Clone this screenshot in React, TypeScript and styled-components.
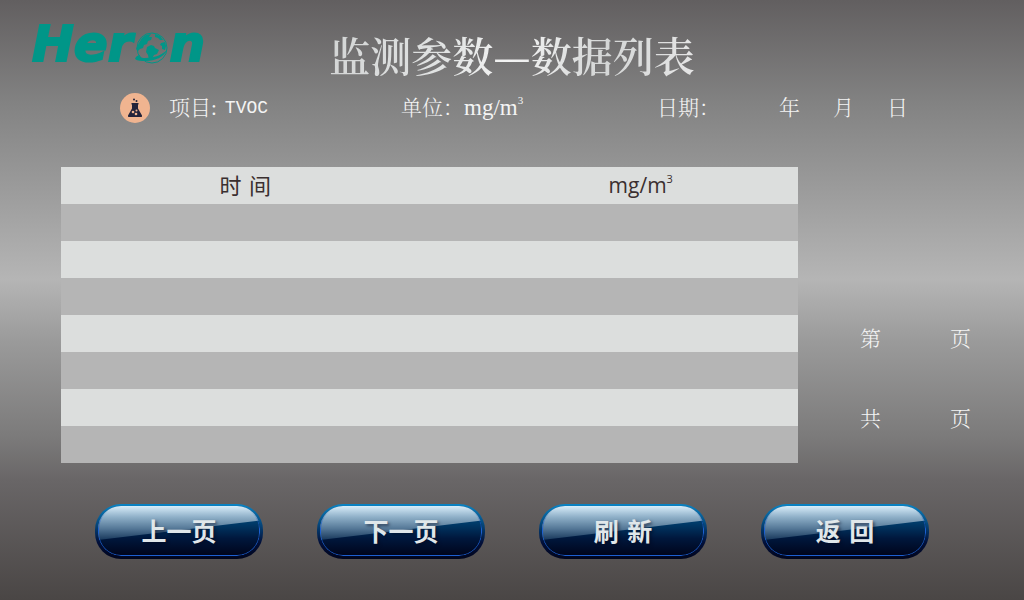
import React from "react";
import styled, { createGlobalStyle } from "styled-components";

const serif = `"Liberation Serif", "Noto Serif CJK SC", "Noto Sans CJK SC", serif`;
const cjkSerif = `"Noto Serif CJK SC", "Noto Sans CJK SC", serif`;
const sans = `"Noto Sans", "Noto Sans CJK SC", sans-serif`;

const GlobalStyle = createGlobalStyle`
  *, *::before, *::after { box-sizing: border-box; }
  body { margin: 0; }
`;

const Page = styled.div`
  min-height: 100vh;
  display: flex;
  flex-direction: column;
  color: #f4f4f4;
  font-family: ${serif};
  background: linear-gradient(
    #625f60 0%,
    #828282 17%,
    #b5b5b5 46.5%,
    #9a9a9a 57%,
    #7b7a7a 73%,
    #696667 80%,
    #4a4645 100%
  );
`;

const Header = styled.header`
  display: grid;
  grid-template-columns: 1fr auto 1fr;
  height: 88px;
  padding: 0 32px;
`;

const Logo = styled.div`
  display: flex;
  align-items: flex-start;
  padding-top: 16px;
  color: #009688;
  font: italic 700 50px/56px "DejaVu Sans", sans-serif;
  -webkit-text-stroke: 2px #009688;
`;

const Globe = styled.svg`
  width: 34px;
  height: 34px;
  margin: 15px 0 0 3px;
  flex: none;
`;

const Title = styled.h1`
  margin: 0;
  padding-top: 25px;
  font-family: ${cjkSerif};
  font-size: 41px;
  line-height: 60px;
  font-weight: 600;
  color: transparent;
  background: linear-gradient(100deg, #d2d4d4, #e2e4e4 35%, #f4f4f4 50%, #d4d6d6 75%, #e6e6e6);
  background-clip: text;
  -webkit-background-clip: text;
`;

const InfoBar = styled.section`
  display: grid;
  grid-template-columns: 281fr 256fr 367fr;
  align-items: center;
  height: 40px;
  padding-left: 120px;
  font-size: 21px;
  line-height: 40px;
  font-weight: 300;
`;

const Info = styled.div`
  display: flex;
  align-items: center;
`;

const Flask = styled.svg`
  width: 30px;
  height: 30px;
  margin-right: 19px;
`;

const Substance = styled.span`
  margin-left: 8px;
  font-family: "Liberation Mono", monospace;
  font-size: 18px;
`;

const InfoUnit = styled.span`
  font-size: 23px;
`;

const Blank = styled.span<{ $width: number }>`
  width: ${(p) => p.$width}px;
`;

const Sup = styled.sup`
  align-self: flex-start;
  font-size: 11px;
  line-height: 24px;
  vertical-align: top;
`;

const Main = styled.main`
  display: grid;
  grid-template-columns: 737fr 226fr;
  padding: 39px 0 0 61px;
`;

const Table = styled.table`
  width: 100%;
  border-collapse: collapse;
  table-layout: fixed;
  color: #3a2f2f;
  font-family: ${sans};
  font-size: 22px;
`;

const Row = styled.tr<{ $light?: boolean }>`
  height: 37px;
  background: ${(p) => (p.$light ? "#dcdedd" : "#b5b5b5")};
`;

const Cell = styled.td`
  padding: 0;
`;

const HeadCell = styled.th`
  padding: 0;
  font-weight: 400;
  line-height: 37px;
  &:last-child {
    padding-left: 54px;
    font-family: "Open Sans", sans-serif;
    font-size: 21px;
  }
`;

const Pager = styled.aside`
  display: flex;
  flex-direction: column;
  gap: 40px;
  padding: 152px 0 0 62px;
  font-size: 21px;
  line-height: 40px;
  font-weight: 300;
`;

const PageCount = styled.div`
  display: flex;
`;

const Actions = styled.nav`
  display: grid;
  grid-template-columns: repeat(4, 1fr);
  column-gap: 54px;
  padding: 41px 95px;
`;

const GlossButton = styled.button`
  height: 55px;
  padding: 2px 3px 3px;
  border: 0;
  border-radius: 26px;
  background: linear-gradient(#0a84c4, #054a80 35%, #02103a 70%, #01051c);
  color: #e0e7ea;
  font: 700 25px/50px "Noto Sans CJK SC", sans-serif;
  cursor: pointer;
`;

const Face = styled.span`
  position: relative;
  display: block;
  height: 50px;
  overflow: hidden;
  border-radius: 23px;
  background: linear-gradient(#004a80, #003a68 35%, #00173c 65%, #00041a);
  &::before {
    content: "";
    position: absolute;
    inset: 0;
    background: linear-gradient(#d8edfa, #8fb0c8 22%, #557897 45%, #0d2c50 72%);
    clip-path: polygon(0 0, 100% 0, 100% 29%, 0 68%);
  }
  &::after {
    content: "";
    position: absolute;
    inset: 0;
    border: 1px solid #1c5fd0;
    border-radius: 23px;
    mask-image: linear-gradient(transparent 10%, #000 45%);
  }
`;

const Label = styled.span`
  position: relative;
  display: block;
  line-height: 48px;
  text-shadow: 2px 2px 3px rgba(0, 8, 30, 0.5);
`;

const actions = ["上一页", "下一页", "刷\u2004新", "返\u2004回"];

export default function App() {
  return (
    <Page>
      <GlobalStyle />
      <Header>
        <Logo aria-label="Heron">
          <span>Her</span>
          <Globe viewBox="0 0 34 34" aria-hidden="true">
            <circle cx="17" cy="17" r="15" fill="none" stroke="#009688" strokeWidth="1" />
            <path fill="#009688" d="M4 12 7 7l4-3 5-1-2 3 3 0-1 3-3 1-1 3-3 1-1 3-3 1-2 2-2-2z" />
            <path fill="#009688" d="M12 16l4-2 3 1 1 2 4 2-2 4-3 1-2 4-3 1-1-5-2-3z" />
            <path fill="#009688" d="M20 3l5 2 3 4-3 0-2-2-3-1zM26 12l4-1 1 4-1 4-3-1 0-3-2-1z" />
            <path fill="#009688" d="M0 28c1-3 3-4 5-4-1 2 1 3 5 3 9 0 17-3 22-8-3 7-12 11-21 11-5 0-8 0-11-2z" />
          </Globe>
          <span>n</span>
        </Logo>
        <Title>监测参数—数据列表</Title>
      </Header>
      <InfoBar>
        <Info>
          <Flask viewBox="0 0 30 30" aria-hidden="true">
            <circle cx="15" cy="15" r="15" fill="#f0b490" />
            <path fill="#23233b" d="M11.500 10h7v1.500H18v4l4 7q.5 1.500-1 1.500H9q-1.500 0-1-1.500l4-7v-4h-.5z" />
            <circle cx="14" cy="6.500" r="1" fill="#23233b" />
            <circle cx="16.500" cy="8" r="1" fill="#23233b" />
            <circle cx="13" cy="19" r="1.300" fill="#f0b490" />
            <circle cx="16.500" cy="17.500" r="1" fill="#f0b490" />
            <circle cx="16" cy="21" r="1.300" fill="#f0b490" />
          </Flask>
          项目:<Substance>TVOC</Substance>
        </Info>
        <Info>
          单位：<InfoUnit>mg/m</InfoUnit>
          <Sup>3</Sup>
        </Info>
        <Info>
          日期：
          <Blank $width={59} />
          年<Blank $width={33} />
          月<Blank $width={33} />日
        </Info>
      </InfoBar>
      <Main>
        <Table>
          <thead>
            <Row $light>
              <HeadCell scope="col">{"时\u2004间"}</HeadCell>
              <HeadCell scope="col">
                mg/m<Sup>3</Sup>
              </HeadCell>
            </Row>
          </thead>
          <tbody>
            {Array.from({ length: 7 }, (_, i) => (
              <Row key={i} $light={i % 2 === 1}>
                <Cell />
                <Cell />
              </Row>
            ))}
          </tbody>
        </Table>
        <Pager>
          <PageCount>
            第<Blank $width={69} />页
          </PageCount>
          <PageCount>
            共<Blank $width={69} />页
          </PageCount>
        </Pager>
      </Main>
      <Actions>
        {actions.map((text) => (
          <GlossButton key={text} type="button">
            <Face>
              <Label>{text}</Label>
            </Face>
          </GlossButton>
        ))}
      </Actions>
    </Page>
  );
}
